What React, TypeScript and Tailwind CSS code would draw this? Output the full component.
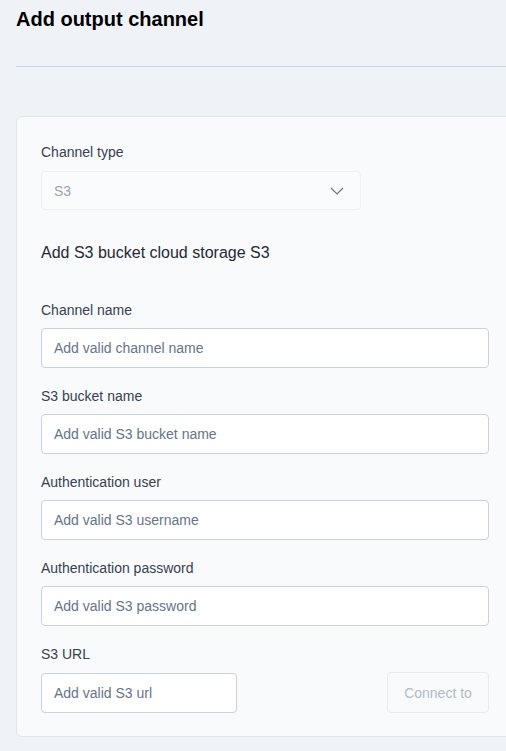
import React from 'react';

type Field = { label: string; placeholder: string };

const FIELDS: Field[] = [
  { label: 'Channel name', placeholder: 'Add valid channel name' },
  { label: 'S3 bucket name', placeholder: 'Add valid S3 bucket name' },
  { label: 'Authentication user', placeholder: 'Add valid S3 username' },
  { label: 'Authentication password', placeholder: 'Add valid S3 password' },
];

const inputClass =
  'h-10 rounded border border-[#c9d2de] bg-white px-3 text-sm text-[#334155] placeholder:text-[#64748b] outline-none';

const App: React.FC = () => {
  return (
    <div className="min-h-screen w-full overflow-hidden bg-[#eff3f8] font-['Liberation_Sans',Arial,sans-serif] text-[#1f2937]">
      <div className="pl-4">
        <h1 className="pt-[5px] text-xl leading-7 font-bold text-black">Add output channel</h1>

        <div className="mt-[33px] h-px w-full bg-[#c8d5e4]" />

        {/* Form card */}
        <div className="mt-[49px] w-[497px] rounded-md border border-[#dfe5ee] bg-[#f8fafc] px-6 pt-[25px] pb-[23px]">
          <label className="block text-sm leading-5 text-[#374151]">Channel type</label>
          <div className="mt-[9px] flex h-[39px] w-[320px] items-center justify-between rounded border border-[#edf0f4] bg-[#fafbfd] px-3">
            <span className="text-sm text-[#9ca3af]">S3</span>
            <svg width="14" height="8" viewBox="0 0 14 8" fill="none" className="mr-1">
              <path d="M1 1l6 6 6-6" stroke="#6b7280" strokeWidth="1.2" />
            </svg>
          </div>

          <h2 className="mt-[31px] text-base leading-6 text-[#1f2937]">Add S3 bucket cloud storage S3</h2>

          <div className="mt-[35px] flex flex-col gap-[18px]">
            {FIELDS.map((f) => (
              <div key={f.label} className="flex flex-col gap-2">
                <label className="text-sm leading-5 text-[#374151]">{f.label}</label>
                <input className={`${inputClass} w-[448px]`} placeholder={f.placeholder} />
              </div>
            ))}

            <div className="flex flex-col gap-2">
              <label className="text-sm leading-5 text-[#374151]">S3 URL</label>
              <div className="flex w-[448px] items-center justify-between">
                <input className={`${inputClass} w-[196px]`} placeholder="Add valid S3 url" />
                <button className="h-[41px] w-[102px] rounded border border-[#e8ecf1] bg-[#f8fafc] text-sm text-[#b2bac6]">
                  Connect to
                </button>
              </div>
            </div>
          </div>
        </div>
      </div>
    </div>
  );
};

export default App;
